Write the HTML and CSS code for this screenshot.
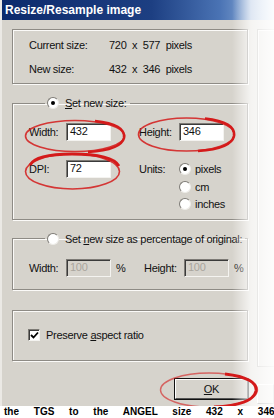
FILE: index.html
```html
<!DOCTYPE html>
<html lang="en">
<head>
  <meta charset="UTF-8" />
  <meta name="viewport" content="width=device-width, initial-scale=1.0" />
  <title>Resize/Resample image</title>
  <link rel="stylesheet" href="styles.css">
</head>
<body>
  <div class="dialog">
    <div class="titlebar">Resize/Resample image</div>

    <div class="content">
      <div class="main">
        <div class="box info">
          <div class="info-row"><span class="info-label">Current size:</span><span>720 &nbsp;x&nbsp; 577 &nbsp;pixels</span></div>
          <div class="info-row"><span class="info-label">New size:</span><span>432 &nbsp;x&nbsp; 346 &nbsp;pixels</span></div>
        </div>

        <fieldset class="group">
          <legend><span class="radio checked"></span><span><u>S</u>et new size:</span></legend>
          <div class="field-row">
            <span class="lbl">Width:</span><span class="input">432</span>
            <span class="lbl lbl-right">Height:</span><span class="input">346</span>
          </div>
          <div class="field-row top">
            <span class="lbl">DPI:</span><span class="input">72</span>
            <span class="lbl lbl-right">Units:</span>
            <div class="units">
              <div class="unit"><span class="radio checked"></span><span>pixels</span></div>
              <div class="unit"><span class="radio"></span><span>cm</span></div>
              <div class="unit"><span class="radio"></span><span>inches</span></div>
            </div>
          </div>
        </fieldset>

        <fieldset class="group percent">
          <legend><span class="radio"></span><span>Set <u>n</u>ew size as percentage of original:</span></legend>
          <div class="field-row">
            <span class="lbl">Width:</span><span class="input disabled">100</span><span class="pct">%</span>
            <span class="lbl lbl-right2">Height:</span><span class="input disabled">100</span><span class="pct">%</span>
          </div>
        </fieldset>

        <div class="box options">
          <span class="checkbox">
            <svg width="9" height="9" viewBox="0 0 9 9"><path d="M1 4 L3.5 6.5 L8 1.5" fill="none" stroke="#000" stroke-width="1.8"/></svg>
          </span>
          <span>Preserve <u>a</u>spect ratio</span>
        </div>

        <div class="buttons">
          <span class="button default"><u>O</u>K</span>
        </div>
      </div>

      <div class="side">
        <div class="side-box"></div>
        <span class="button side-button"></span>
      </div>
    </div>

    <div class="fade"></div>

    <svg class="marks" width="274" height="418" viewBox="0 0 274 418">
      <g fill="none" stroke="#d41a1a">
        <ellipse cx="75" cy="136" rx="49.5" ry="15.5" stroke-width="1.6" opacity="0.85"/>
        <path d="M95 121 Q126 124 124 138 Q121 150 88 152" stroke-width="2.6"/>
        <ellipse cx="186.5" cy="134.5" rx="48" ry="16.5" stroke-width="1.6" opacity="0.85"/>
        <path d="M205 118.5 Q236 122 234 136 Q231 149 198 151" stroke-width="2.6"/>
        <ellipse cx="72.5" cy="171.5" rx="47" ry="17.5" stroke-width="1.6" opacity="0.85"/>
        <path d="M30 165 Q36 154 72 154 Q112 154 119 166" stroke-width="2.8"/>
        <ellipse cx="209" cy="390" rx="48.5" ry="17" stroke-width="1.4" opacity="0.6"/>
        <path d="M225 374 Q258 378 256 391 Q253 405 214 407" stroke-width="3"/>
      </g>
    </svg>
  </div>

  <div class="caption">the TGS to the ANGEL size 432 x 346</div>
</body>
</html>
```

FILE: styles.css
```css
body {
  margin: 0;
  width: 274px;
  height: 418px;
  overflow: hidden;
  background: #fff;
  font-family: 'Liberation Sans', Arial, sans-serif;
  font-size: 11px;
  letter-spacing: -0.3px;
  color: #111;
}
u {
  text-decoration: underline;
  text-underline-offset: 1px;
}
.dialog {
  position: relative;
  height: 406px;
  background: #d6d3cc;
  border-left: 2px solid #ebe9e5;
  box-sizing: border-box;
  overflow: hidden;
}
.titlebar {
  height: 20px;
  line-height: 20px;
  padding-left: 3px;
  background: linear-gradient(to right, #0c2a6c 0%, #1d3f82 55%, #4a73b4 80%, #a8c4e6 100%);
  color: #fff;
  font-weight: bold;
  font-size: 12px;
  letter-spacing: 0;
}
.content {
  display: flex;
  gap: 9px;
  padding: 9px 0 0 10px;
}
.main {
  width: 236px;
  flex: none;
}
.box,
.group {
  border: 1px solid #8e8b85;
  box-shadow: inset 1px 1px 0 #fbfaf8, 1px 1px 0 #fbfaf8;
}
.info {
  height: 55px;
  box-sizing: border-box;
  padding: 8px 0 0 16px;
}
.info-row {
  display: flex;
  height: 15px;
  line-height: 15px;
  margin-bottom: 9px;
}
.info-label {
  width: 80px;
}
.group {
  margin: 12px 0 0;
  padding: 13px 0 6px 16px;
  min-width: 0;
}
.group legend {
  margin-left: 16px;
  padding: 0 3px 0 2px;
  height: 14px;
  line-height: 14px;
  display: flex;
  align-items: center;
  white-space: nowrap;
}
.group legend .radio {
  margin-right: 6px;
}
.field-row {
  display: flex;
  align-items: center;
  height: 18px;
}
.field-row.top {
  align-items: flex-start;
  height: auto;
  margin-top: 19px;
}
.field-row.top .lbl {
  line-height: 18px;
}
.lbl {
  width: 37px;
}
.lbl-right {
  width: 40px;
  margin-left: 28px;
}
.lbl-right2 {
  width: 40px;
  margin-left: 15px;
}
.input {
  width: 45px;
  height: 18px;
  box-sizing: border-box;
  line-height: 15px;
  padding-left: 3px;
  background: #fff;
  border: 1px solid;
  border-color: #7d7a75 #f4f3f0 #f4f3f0 #7d7a75;
  box-shadow: inset 1px 1px 0 #3a3a3a;
}
.input.disabled {
  background: #d6d3cc;
  color: #a9a59e;
}
.pct {
  width: 13px;
  padding-left: 5px;
}
.units {
  display: flex;
  flex-direction: column;
}
.unit {
  display: flex;
  align-items: center;
  height: 17px;
  margin-top: 0.5px;
}
.unit .radio {
  margin-right: 4px;
}
.radio {
  display: inline-block;
  position: relative;
  width: 10px;
  height: 10px;
  border-radius: 50%;
  background: #fff;
  border: 1px solid;
  border-color: #7d7a75 #eeece8 #eeece8 #7d7a75;
  flex: none;
}
.radio.checked::after {
  content: "";
  position: absolute;
  left: 3px;
  top: 3px;
  width: 4px;
  height: 4px;
  border-radius: 50%;
  background: #000;
}
.percent {
  padding: 13px 0 12px 16px;
}
.options {
  margin-top: 20px;
  height: 51px;
  box-sizing: border-box;
  display: flex;
  align-items: center;
  padding-left: 15px;
}
.checkbox {
  width: 12px;
  height: 12px;
  box-sizing: border-box;
  margin-right: 6px;
  background: #fff;
  border: 1px solid;
  border-color: #7d7a75 #f4f3f0 #f4f3f0 #7d7a75;
  box-shadow: inset 1px 1px 0 #3a3a3a;
  display: flex;
  align-items: center;
  justify-content: center;
}
.buttons {
  display: flex;
  justify-content: flex-end;
  margin-top: 18px;
}
.button {
  display: flex;
  align-items: center;
  justify-content: center;
  width: 73px;
  height: 20px;
  box-sizing: border-box;
  background: #d6d3cc;
  border: 1px solid;
  border-color: #fff #404040 #404040 #fff;
}
.button.default {
  outline: 1px solid #111;
  border-color: #fff #555 #555 #fff;
}
.side {
  flex: 1;
  display: flex;
  flex-direction: column;
}
.side-box {
  height: 336px;
  border: 1px solid #8e8b85;
  border-right: none;
  box-shadow: inset 1px 1px 0 #fbfaf8;
}
.side-button {
  margin-top: 17px;
  width: auto;
}
.fade {
  position: absolute;
  top: 0;
  right: 0;
  width: 42px;
  height: 100%;
  background: linear-gradient(to right, rgba(255,255,255,0) 0%, rgba(255,255,255,0.75) 45%, rgba(255,255,255,0.95) 100%);
}
.marks {
  position: absolute;
  left: -2px;
  top: 0;
}
.caption {
  height: 10px;
  padding: 1px 0 0 4px;
  font-size: 10px;
  line-height: 10px;
  font-weight: bold;
  color: #000;
  letter-spacing: 0;
  white-space: nowrap;
  word-spacing: 12px;
  overflow: hidden;
}
```
